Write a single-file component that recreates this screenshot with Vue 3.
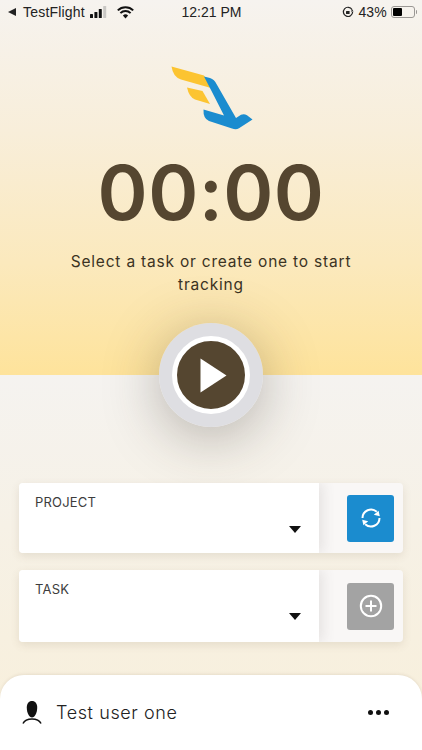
<script setup>
const fields = [
  { label: 'PROJECT', action: 'sync' },
  { label: 'TASK', action: 'add' },
];
</script>

<template>
  <div class="page">
    <section class="hero">
      <div class="status">
        <div class="status-left">
          <span class="back"></span>
          <span>TestFlight</span>
          <svg class="signal" width="20" height="13" viewBox="0 0 20 13">
            <rect x="0" y="8" width="3" height="4" rx="0.6" fill="#111" />
            <rect x="4.4" y="6" width="3" height="6" rx="0.6" fill="#111" />
            <rect x="8.8" y="3" width="3" height="9" rx="0.6" fill="#111" />
            <rect x="13.2" y="0" width="3" height="12" rx="0.6" fill="#c9c7c4" />
          </svg>
          <svg class="wifi" width="17" height="13" viewBox="0 0 17 13">
            <path d="M0.8 4.4a11 11 0 0 1 15.4 0" fill="none" stroke="#111" stroke-width="2" />
            <path d="M3.4 7.1a7.3 7.3 0 0 1 10.2 0" fill="none" stroke="#111" stroke-width="2" />
            <path d="M8.5 12.6l-2.6-3a3.6 3.6 0 0 1 5.2 0z" fill="#111" />
          </svg>
        </div>
        <div class="status-time">12:21 PM</div>
        <div class="status-right">
          <svg width="12" height="12" viewBox="0 0 12 12">
            <path d="M10 3.6A4.6 4.6 0 1 0 10.6 6" fill="none" stroke="#222" stroke-width="1.2" />
            <path d="M11.6 5.4H8.8l1.4-2z" fill="#222" />
            <rect x="4" y="5" width="3.6" height="3" rx="0.5" fill="#222" />
          </svg>
          <span>43%</span>
          <div class="battery"><div class="battery-fill"></div></div>
        </div>
      </div>

      <svg class="logo" width="90" height="75" viewBox="165 60 90 75">
        <path d="M170.5 66.5 L203 75.5 L210 88 L180 79.5 Q172 77 170.5 66.5Z" fill="#fcc431" />
        <path d="M186 87.5 L201.5 91 L209 104 L194 99.5 Q188 97 186 87.5Z" fill="#fcc431" />
        <path d="M203 76.5 L209 78 Q213.5 79.5 215.5 84 L235 118 L240 114.8 Q243 113.5 246 115.2 L251.5 119.5 L238 128.3 Q235 130 231 128.5 L208 121 Q202 118.5 202.5 109.5 L223 115.5 L209.5 89Z" fill="#1b8ccf" />
      </svg>

      <div class="timer">00:00</div>
      <p class="hint">Select a task or create one to start tracking</p>
    </section>

    <button class="play" type="button" aria-label="Start">
      <span class="play-inner">
        <svg width="27" height="35" viewBox="0 0 27 35">
          <path d="M0.5 0.5 L26.5 17.5 L0.5 34.5Z" fill="#fff" />
        </svg>
      </span>
    </button>

    <section class="lower">
      <div v-for="field in fields" :key="field.label" class="field">
        <div class="select">
          <div class="select-label">{{ field.label }}</div>
          <div class="caret"></div>
        </div>
        <div class="field-action">
          <div class="action-btn" :class="field.action">
            <svg v-if="field.action === 'sync'" width="24" height="24" viewBox="0 0 24 24" fill="none">
              <path d="M3.5 12A8.5 8.5 0 0 1 17.8 5.8" stroke="#fff" stroke-width="2" />
              <path d="M20.5 12A8.5 8.5 0 0 1 6.2 18.2" stroke="#fff" stroke-width="2" />
              <path d="M20.8 10.2l-6-1.400 4.800-4z" fill="#fff" />
              <path d="M3.2 13.800l6 1.400-4.800 4z" fill="#fff" />
            </svg>
            <svg v-else width="24" height="24" viewBox="0 0 24 24" fill="none">
              <circle cx="12" cy="12" r="10.2" stroke="#fff" stroke-width="2" />
              <path d="M12 6.5v11M6.500 12h11" stroke="#fff" stroke-width="2" />
            </svg>
          </div>
        </div>
      </div>

      <div class="user-bar">
        <svg class="user-icon" width="20" height="23" viewBox="0 0 20 23">
          <path d="M10 0c3.200 0 5.200 2.400 5.200 6.500 0 5.500-2.400 10-5.200 10s-5.200-4.500-5.200-10C4.800 2.400 6.800 0 10 0z" fill="#111" />
          <path d="M1 22.500c1.500-3 5-4.500 9-4.500s7.500 1.500 9 4.500" fill="none" stroke="#111" stroke-width="1.600" />
        </svg>
        <span class="user-name">Test user one</span>
        <div class="dots"><i></i><i></i><i></i></div>
      </div>
    </section>
  </div>
</template>

<style scoped>
.page {
  position: relative;
  width: 422px;
  height: 750px;
  overflow: hidden;
  font-family: "Inter", "Liberation Sans", sans-serif;
  color: #222;
}

.hero {
  height: 375px;
  display: flex;
  flex-direction: column;
  align-items: center;
  background: linear-gradient(180deg, #f6f3ef 0%, #f8eeda 35%, #fbe9bd 70%, #fee39b 100%);
}

.status {
  align-self: stretch;
  height: 24px;
  display: grid;
  grid-template-columns: 1fr auto 1fr;
  align-items: center;
  padding: 0 7px 0 8px;
  font-family: "Liberation Sans", sans-serif;
  font-size: 14px;
  color: #222;
  letter-spacing: 0.2px;
}

.status-left {
  display: flex;
  align-items: center;
  gap: 5px;
}

.back {
  width: 0;
  height: 0;
  border-top: 4px solid transparent;
  border-bottom: 4px solid transparent;
  border-right: 8px solid #222;
  margin-right: 2px;
}

.wifi {
  margin-left: 2px;
}

.status-time {
  font-size: 14px;
  letter-spacing: 0;
}

.status-right {
  display: flex;
  align-items: center;
  justify-content: flex-end;
  gap: 4px;
}

.battery {
  width: 24px;
  height: 12px;
  border: 1px solid #9a9794;
  border-radius: 3px;
  padding: 1px;
  box-sizing: border-box;
  position: relative;
}

.battery::after {
  content: "";
  position: absolute;
  right: -3px;
  top: 3px;
  width: 1.5px;
  height: 4px;
  background: #9a9794;
  border-radius: 0 1px 1px 0;
}

.battery-fill {
  width: 9px;
  height: 100%;
  background: #000;
  border-radius: 1px;
}

.logo {
  margin-top: 36px;
}

.timer {
  margin-top: 12px;
  font-size: 76px;
  line-height: 90px;
  font-weight: 600;
  color: #554630;
  letter-spacing: 0.4px;
}

.hint {
  margin: 13px 0 0;
  width: 300px;
  text-align: center;
  font-size: 15.5px;
  line-height: 23px;
  letter-spacing: 0.8px;
  color: #3b3323;
}

.play {
  position: absolute;
  left: 159px;
  top: 323px;
  width: 104px;
  height: 104px;
  padding: 0;
  border: none;
  border-radius: 50%;
  display: flex;
  align-items: center;
  justify-content: center;
  background: radial-gradient(circle, #dedee2 0%, #dedee2 78%, #dad7d0 90%, #d6d3c9 100%);
  box-shadow: 0 10px 55px rgba(60, 50, 40, 0.34);
}

.play-inner {
  width: 78px;
  height: 78px;
  box-sizing: border-box;
  border: 5px solid #fff;
  border-radius: 50%;
  background: #554630;
  display: flex;
  align-items: center;
  justify-content: center;
}

.play-inner svg {
  margin-left: 5px;
}

.lower {
  height: 375px;
  box-sizing: border-box;
  padding: 108px 19px 0;
  display: flex;
  flex-direction: column;
  gap: 17px;
  background: linear-gradient(180deg, #f5f3f0 0%, #f6f1e6 40%, #f8efda 100%);
}

.field {
  height: 70px;
  flex-shrink: 0;
  display: flex;
  border-radius: 4px;
  background: #f9f7f6;
  box-shadow: 0 3px 8px rgba(120, 100, 70, 0.14);
  overflow: hidden;
}

.field + .field {
  height: 72px;
}

.select {
  flex: 1;
  position: relative;
  background: #fff;
  padding: 11px 16px;
  box-shadow: 4px 0 12px rgba(90, 80, 80, 0.12);
}

.select-label {
  font-size: 13px;
  line-height: 16px;
  letter-spacing: 0.2px;
  color: #3d3d3d;
}

.caret {
  position: absolute;
  right: 18px;
  top: 43px;
  width: 0;
  height: 0;
  border-left: 6px solid transparent;
  border-right: 6px solid transparent;
  border-top: 7px solid #111;
}

.field-action {
  width: 84px;
  display: flex;
  align-items: center;
  justify-content: flex-end;
  padding-right: 9px;
  box-sizing: border-box;
}

.action-btn {
  width: 47px;
  height: 47px;
  border-radius: 3px;
  display: flex;
  align-items: center;
  justify-content: center;
}

.action-btn.sync {
  background: #1b8ccf;
}

.action-btn.add {
  background: #a3a3a3;
}

.user-bar {
  margin: 16px -19px 0;
  height: 75px;
  flex-shrink: 0;
  box-sizing: border-box;
  padding: 0 33px 0 22px;
  display: flex;
  align-items: center;
  background: #fff;
  border-radius: 24px 24px 0 0;
  box-shadow: 0 -1px 3px rgba(120, 100, 70, 0.12);
}

.user-name {
  flex: 1;
  margin-left: 14px;
  font-size: 18px;
  font-weight: 300;
  letter-spacing: 0.6px;
  color: #222;
}

.dots {
  display: flex;
  gap: 3px;
}

.dots i {
  width: 5px;
  height: 5px;
  border-radius: 50%;
  background: #111;
}
</style>

<style>
html, body {
  margin: 0;
  background: #f6f1e6;
}
</style>
